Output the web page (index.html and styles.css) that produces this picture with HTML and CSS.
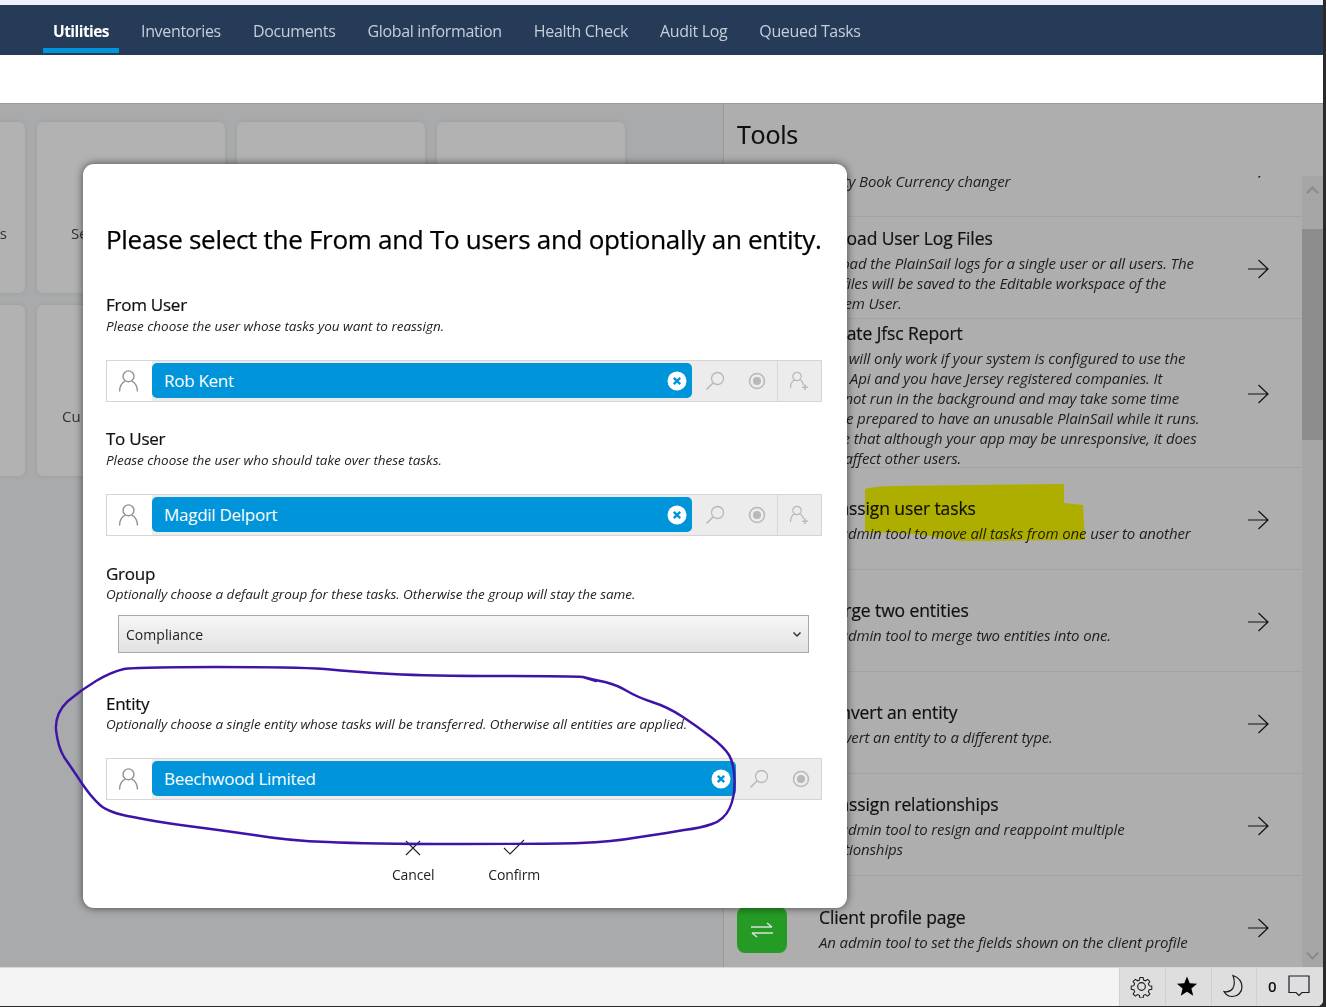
FILE: index.html
```html
<!DOCTYPE html>
<html lang="en">
<head>
<meta charset="utf-8">
<title>Utilities</title>
<link rel="stylesheet" href="styles.css">
</head>
<body>
<svg width="0" height="0" class="defs">
  <defs>
    <symbol id="i-user" viewBox="0 0 20 22"><circle cx="10" cy="6.5" r="5.200" fill="none" stroke="currentColor" stroke-width="1.300"/><path d="M1.500 21c0-5.500 2.500-8.500 5.500-10M18.500 21c0-5.500-2.500-8.500-5.500-10" fill="none" stroke="currentColor" stroke-width="1.300"/></symbol>
    <symbol id="i-search" viewBox="0 0 20 20"><circle cx="12.500" cy="7.500" r="6" fill="none" stroke="currentColor" stroke-width="1.300"/><path d="M8 12L1.500 18.500" fill="none" stroke="currentColor" stroke-width="1.600"/></symbol>
    <symbol id="i-target" viewBox="0 0 20 20"><circle cx="10" cy="10" r="7.500" fill="none" stroke="currentColor" stroke-width="1.500"/><circle cx="10" cy="10" r="4" fill="currentColor"/></symbol>
    <symbol id="i-adduser" viewBox="0 0 20 20"><circle cx="8" cy="5.500" r="4.200" fill="none" stroke="currentColor" stroke-width="1.200"/><path d="M1.500 17c0-4.500 2-7 4-8M14.500 14c-.5-2.500-2-4.300-3-5" fill="none" stroke="currentColor" stroke-width="1.200"/><path d="M16 13.500v5.500M13.300 16.300h5.500" fill="none" stroke="currentColor" stroke-width="1.500"/></symbol>
    <symbol id="i-clear" viewBox="0 0 20 20"><circle cx="10" cy="10" r="9.500" fill="#fff"/><path d="M6.800 6.800l6.400 6.400M13.200 6.800l-6.400 6.400" fill="none" stroke="#0095da" stroke-width="2.400"/></symbol>
    <symbol id="i-arrow" viewBox="0 0 22 20"><path d="M1 10h20M11.500 1l9.500 9-9.500 9" fill="none" stroke="currentColor" stroke-width="1.200"/></symbol>
  </defs>
</svg>

<div class="window">
  <div class="top-strip"></div>
  <nav class="nav">
    <a class="nav-item active">Utilities</a>
    <a class="nav-item">Inventories</a>
    <a class="nav-item">Documents</a>
    <a class="nav-item">Global information</a>
    <a class="nav-item">Health Check</a>
    <a class="nav-item">Audit Log</a>
    <a class="nav-item">Queued Tasks</a>
  </nav>
  <div class="subbar"></div>

  <main class="main">
    <section class="board">
      <div class="card-grid">
        <div class="card card-cut"><span class="card-label">s</span></div>
        <div class="card card-se"><span class="card-label">Se</span></div>
        <div class="card"></div>
        <div class="card"></div>
        <div class="card card-cut"></div>
        <div class="card"><span class="card-label">Cu</span></div>
      </div>
    </section>

    <aside class="tools">
      <h2 class="tools-title">Tools</h2>
      <div class="tools-body">
        <div class="tool-list">
          <div class="tool tool-first">
            <div class="tool-text"><p class="tool-desc">Entity Book Currency changer</p></div>
            <svg class="arrow-tip" viewBox="0 0 22 2"><path d="M11.500 1.500L13 0" fill="none" stroke="#111" stroke-width="1.200"/></svg>
          </div>
          <div class="tool tool-3">
            <div class="tool-text"><h3>Upload User Log Files</h3><p class="tool-desc">Upload the PlainSail logs for a single user or all users. The<br>log files will be saved to the Editable workspace of the<br>System User.</p></div>
            <svg class="arrow"><use href="#i-arrow"/></svg>
          </div>
          <div class="tool tool-6">
            <div class="tool-text"><h3>Create Jfsc Report</h3><p class="tool-desc">This will only work if your system is configured to use the<br>JFSC Api and you have Jersey registered companies. It<br>will not run in the background and may take some time<br>so be prepared to have an unusable PlainSail while it runs.<br>Note that although your app may be unresponsive, it does<br>not affect other users.</p></div>
            <svg class="arrow"><use href="#i-arrow"/></svg>
          </div>
          <div class="tool">
            <div class="tool-text"><h3>Reassign user tasks</h3><p class="tool-desc">An admin tool to move all tasks from one user to another</p></div>
            <svg class="arrow"><use href="#i-arrow"/></svg>
          </div>
          <div class="tool">
            <div class="tool-text"><h3>Merge two entities</h3><p class="tool-desc">An admin tool to merge two entities into one.</p></div>
            <svg class="arrow"><use href="#i-arrow"/></svg>
          </div>
          <div class="tool">
            <div class="tool-text"><h3>Convert an entity</h3><p class="tool-desc">Convert an entity to a different type.</p></div>
            <svg class="arrow"><use href="#i-arrow"/></svg>
          </div>
          <div class="tool">
            <div class="tool-text"><h3>Reassign relationships</h3><p class="tool-desc">An admin tool to resign and reappoint multiple<br>relationships</p></div>
            <svg class="arrow"><use href="#i-arrow"/></svg>
          </div>
          <div class="tool tool-last">
            <div class="tool-icon"><svg viewBox="0 0 24 16" width="24" height="16"><path d="M1 5h21M17 1l5 4M23 11H2M7 15l-5-4" fill="none" stroke="#d8e2d8" stroke-width="1.600"/></svg></div>
            <div class="tool-text"><h3>Client profile page</h3><p class="tool-desc">An admin tool to set the fields shown on the client profile</p></div>
            <svg class="arrow"><use href="#i-arrow"/></svg>
          </div>
        </div>
        <div class="scrollbar">
          <span class="chev chev-up"></span>
          <span class="thumb"></span>
          <span class="chev chev-down"></span>
        </div>
      </div>
    </aside>
  </main>

  <footer class="footer">
    <div class="footer-btns">
      <span class="f-btn"><svg viewBox="0 0 24 24" width="23" height="23"><path d="M10.200 1.500h3.600l.6 3 2.200.9 2.600-1.700 2.500 2.500-1.700 2.600.9 2.200 3 .6v3.600l-3 .6-.9 2.200 1.700 2.600-2.500 2.500-2.600-1.700-2.200.9-.6 3h-3.600l-.6-3-2.200-.9-2.600 1.700-2.500-2.500 1.700-2.600-.9-2.200-3-.6v-3.600l3-.6.9-2.200-1.700-2.600 2.500-2.500 2.600 1.700 2.200-.9z" transform="translate(1.200 1.200) scale(.9)" fill="none" stroke="#1a1a1a" stroke-width="1.200"/><circle cx="12" cy="12" r="4" fill="none" stroke="#1a1a1a" stroke-width="1.200"/></svg></span>
      <span class="f-btn f-star"><svg viewBox="0 0 24 24" width="22" height="22"><path d="M12 1.500l3 7.600 8 .5-6.200 5.100 2 7.800L12 18.200l-6.800 4.300 2-7.800L1 9.600l8-.5z" fill="#000"/></svg></span>
      <span class="f-btn f-moon"><svg viewBox="0 0 24 24" width="24" height="24"><path d="M12 1.500c5 1.800 9 6 9 11.500a9.500 9.500 0 0 1-9.500 9.500c-3.700 0-7-2-8.500-5 7 1.500 13-4 9-16z" fill="none" stroke="#1a1a1a" stroke-width="1.200"/></svg></span>
      <span class="f-btn f-msg"><span class="f-count">0</span><svg viewBox="0 0 22 22" width="22" height="22"><path d="M1 1h20v16.500h-7L11 20.500 8 17.500H1z" fill="none" stroke="#1a1a2a" stroke-width="1.200"/></svg></span>
    </div>
  </footer>

  <svg class="highlight" viewBox="0 0 1326 1007" width="1326" height="1007">
    <path d="M865 489Q870 487 890 486L1064 484 1064 503 1083 505 1085 540 960 541Q930 535 900 533L865 532Z" fill="#b3b300"/>
  </svg>

  <div class="modal">
    <h1 class="modal-title">Please select the From and To users and optionally an entity.</h1>

    <div class="field">
      <div class="field-label">From User</div>
      <div class="field-hint">Please choose the user whose tasks you want to reassign.</div>
      <div class="picker">
        <svg class="p-user"><use href="#i-user"/></svg>
        <div class="chip"><span>Rob Kent</span><svg class="chip-x"><use href="#i-clear"/></svg></div>
        <div class="p-tools"><svg class="p-ico"><use href="#i-search"/></svg><svg class="p-ico"><use href="#i-target"/></svg></div>
        <div class="p-add"><svg class="p-ico"><use href="#i-adduser"/></svg></div>
      </div>
    </div>

    <div class="field">
      <div class="field-label">To User</div>
      <div class="field-hint">Please choose the user who should take over these tasks.</div>
      <div class="picker">
        <svg class="p-user"><use href="#i-user"/></svg>
        <div class="chip"><span>Magdil Delport</span><svg class="chip-x"><use href="#i-clear"/></svg></div>
        <div class="p-tools"><svg class="p-ico"><use href="#i-search"/></svg><svg class="p-ico"><use href="#i-target"/></svg></div>
        <div class="p-add"><svg class="p-ico"><use href="#i-adduser"/></svg></div>
      </div>
    </div>

    <div class="field field-group">
      <div class="field-label">Group</div>
      <div class="field-hint">Optionally choose a default group for these tasks. Otherwise the group will stay the same.</div>
      <div class="select"><span>Compliance</span><svg width="10" height="7" viewBox="0 0 10 7"><path d="M1.500 1.500L5 5l3.500-3.500" fill="none" stroke="#333" stroke-width="1.500"/></svg></div>
    </div>

    <div class="field field-entity">
      <div class="field-label">Entity</div>
      <div class="field-hint">Optionally choose a single entity whose tasks will be transferred. Otherwise all entities are applied.</div>
      <div class="picker">
        <svg class="p-user"><use href="#i-user"/></svg>
        <div class="chip"><span>Beechwood Limited</span><svg class="chip-x"><use href="#i-clear"/></svg></div>
        <div class="p-tools"><svg class="p-ico"><use href="#i-search"/></svg><svg class="p-ico"><use href="#i-target"/></svg></div>
      </div>
    </div>

    <div class="actions">
      <button class="action"><svg width="18" height="18" viewBox="0 0 18 18"><path d="M2 2l14 14M16 2L2 16" fill="none" stroke="#222" stroke-width="1.100"/></svg><span>Cancel</span></button>
      <button class="action"><svg width="22" height="18" viewBox="0 0 22 18"><path d="M1 9l6 6L21 1" fill="none" stroke="#222" stroke-width="1.100"/></svg><span>Confirm</span></button>
    </div>
  </div>

  <svg class="scribble" viewBox="0 0 1326 1007" width="1326" height="1007">
    <path d="M583 677Q594 680 605 682Q617 685 627 691Q637 697 652 702Q668 707 683 717Q698 727 711 737Q724 747 729 755Q734 763 734.500 780Q735 797 729.500 808.500Q724 820 712 824Q701 828 684 830Q668 833 640 837Q611 842 580 843Q550 844 458 844Q366 844 328 842Q290 841 254 835Q219 830 188 826Q157 822 133 817Q109 813 100 805Q91 797 81 782Q71 767 64 757Q58 747 56 730Q55 713 68 701Q81 690 96 681Q111 672 124 669Q137 667 216 667Q295 667 325 669Q356 672 392 674Q428 676 500 676Q571 676 583 677L596 681" fill="none" stroke="#3f13a6" stroke-width="2.400" stroke-linejoin="round" stroke-linecap="round"/>
  </svg>
</div>
</body>
</html>
```

FILE: styles.css
```css
* { box-sizing: border-box; }
html, body { margin: 0; padding: 0; }
body {
  width: 1326px;
  height: 1007px;
  overflow: hidden;
  background: #2a2a2a;
  font-family: "Open Sans", "Noto Sans", sans-serif;
  color: #111;
}
.defs { position: absolute; }
.window {
  position: relative;
  width: 1323px;
  height: 1006px;
  background: #fff;
  display: flex;
  flex-direction: column;
  overflow: hidden;
  border-bottom-right-radius: 6px;
}
.top-strip { height: 5px; background: #eff2fb; flex: none; }
.nav {
  height: 50px;
  flex: none;
  background: #253b57;
  display: flex;
  padding: 0 0 0 43px;
}
.nav-item {
  height: 48px;
  padding: 4px 10px 0;
  margin-right: 12px;
  display: flex;
  align-items: center;
  font-size: 16px;
  letter-spacing: -.34px;
  color: #c5ced9;
  white-space: nowrap;
}
.nav-item.active {
  color: #fff;
  font-weight: 700;
  font-size: 15.500px;
  letter-spacing: -.55px;
  border-bottom: 5px solid #0095da;
  padding-top: 9px;
}
.subbar { height: 48px; flex: none; background: #fff; }
.main {
  flex: 1;
  display: flex;
  min-height: 0;
  background: #a9aaab;
  border-top: 1px solid #9a9a9a;
}
.board {
  width: 723px;
  flex: none;
  overflow: hidden;
  padding-top: 18px;
}
.card-grid {
  display: grid;
  grid-template-columns: repeat(4, 188px);
  grid-auto-rows: 171px;
  gap: 12px;
  margin-left: -163px;
}
.card {
  background: #b2b2b2;
  border-radius: 6px;
  box-shadow: 0 0 5px rgba(0,0,0,.08);
  display: flex;
  align-items: center;
  padding: 50px 0 0 25px;
  font-size: 15px;
  color: #333;
}
.card-se { padding-left: 34px; }
.card-cut { justify-content: flex-end; padding: 50px 18px 0 0; }
.card-cut:nth-child(5) { grid-column: 1; }
.tools {
  flex: 1;
  display: flex;
  flex-direction: column;
  background: #aeaeae;
  border-left: 1px solid #9a9a9a;
  min-width: 0;
}
.tools-title {
  margin: 0;
  height: 72px;
  padding: 12px 0 0 13px;
  font-size: 25px;
  line-height: 36px;
  font-weight: 400;
  letter-spacing: -.2px;
  color: #0e0e0e;
  -webkit-text-stroke: .2px #0e0e0e;
}
.tools-body { flex: 1; display: flex; min-height: 0; }
.tool-list { flex: 1; min-width: 0; }
.tool {
  height: 102px;
  display: flex;
  align-items: center;
  padding: 0 33px 0 95px;
  border-bottom: 1px solid #a3a3a3;
  position: relative;
}
.tool-first { height: 41px; align-items: flex-start; }
.tool-first .tool-text { padding-top: 0; }
.tool-first .tool-desc { line-height: 10px; }
.arrow-tip { width: 22px; height: 2px; flex: none; }
.tool-3 .tool-text { align-self: flex-start; padding-top: 10px; }
.tool-6 { height: 149px; }
.tool-6 .tool-text { align-self: flex-start; padding-top: 3px; }
.tool-text { flex: 1; min-width: 0; padding-top: 2px; }
.tool h3 {
  margin: 0 0 3px;
  font-size: 17.500px;
  line-height: 23px;
  font-weight: 400;
  letter-spacing: -.1px;
  color: #111;
  -webkit-text-stroke: .2px #111;
}
.tool-desc {
  margin: 0;
  font-size: 15px;
  line-height: 20px;
  font-style: italic;
  letter-spacing: -.12px;
  color: #1e1e1e;
  white-space: nowrap;
}
.tool-last { height: 91px; align-items: flex-start; border-bottom: 0; }
.tool-last .tool-text { padding-top: 30px; }
.tool-last .arrow { margin-top: 42px; }
.arrow { width: 22px; height: 20px; flex: none; color: #111; margin-top: 2px; }
.tool-icon {
  position: absolute;
  left: 13px;
  top: 31px;
  width: 50px;
  height: 46px;
  border-radius: 8px;
  background: #259b25;
  display: flex;
  align-items: center;
  justify-content: center;
}
.scrollbar {
  width: 21px;
  flex: none;
  background: #a6a6a6;
  display: flex;
  flex-direction: column;
  align-items: center;
  position: relative;
}
.thumb { position: absolute; left: 0; right: 0; top: 53px; height: 211px; background: #8c8c8c; }
.chev {
  position: absolute;
  left: 6px;
  width: 9px;
  height: 9px;
  border-left: 2px solid #8a8a8a;
  border-top: 2px solid #8a8a8a;
}
.chev-up { top: 12px; transform: rotate(45deg); }
.chev-down { bottom: 9px; transform: rotate(225deg); }
.footer {
  height: 39px;
  flex: none;
  background: #f4f4f4;
  display: flex;
  justify-content: flex-end;
  border-top: 1px solid #d8d8d8;
}
.footer-btns { display: flex; background: #dedede; width: 204px; }
.f-btn {
  width: 46px;
  display: flex;
  align-items: center;
  justify-content: center;
  border-left: 1px solid #cfcfcf;
  padding: 0 2px 2px 0;
}
.f-star { padding-right: 4px; }
.f-moon { width: 45px; }
.f-msg { width: 67px; gap: 11px; justify-content: flex-start; padding: 0 0 2px 11px; }
.f-count { font-size: 15px; font-weight: 600; }
.highlight { position: absolute; left: 0; top: 0; pointer-events: none; mix-blend-mode: darken; }
.modal {
  position: absolute;
  left: 83px;
  top: 164px;
  width: 764px;
  height: 744px;
  background: #fff;
  border-radius: 11px;
  box-shadow: 0 0 9px rgba(0,0,0,.6);
  padding: 58px 25px 0 23px;
}
.modal-title {
  margin: 0;
  font-size: 26px;
  line-height: 34px;
  font-weight: 400;
  letter-spacing: -.29px;
  white-space: nowrap;
  color: #000;
  -webkit-text-stroke: .25px #000;
}
.field { margin-top: 25px; }
.modal-title + .field { margin-top: 37px; }
.field-label {
  font-size: 17px;
  line-height: 23px;
  letter-spacing: -.25px;
  color: #111;
  -webkit-text-stroke: .2px #111;
}
.field-hint {
  margin-top: 1px;
  font-size: 13.500px;
  line-height: 18px;
  font-style: italic;
  letter-spacing: -.03px;
  white-space: nowrap;
  color: #222;
}
.picker {
  height: 42px;
  margin-top: 25px;
  border: 1px solid #d5d5d5;
  display: flex;
  align-items: stretch;
  background: #ececec;
}
.p-user {
  width: 45px;
  flex: none;
  padding: 0 13px 0 11px;
  background: #fff;
  color: #8f8f8f;
}
.chip {
  flex: 1;
  min-width: 0;
  margin: 2px 0 3px;
  background: #0095da;
  border-radius: 5px;
  display: flex;
  align-items: center;
  justify-content: space-between;
  padding: 0 5px 0 12px;
  font-size: 17px;
  letter-spacing: -.27px;
  color: #fff;
}
.chip-x { width: 20px; height: 20px; }
.p-tools { display: flex; width: 85px; flex: none; align-items: center; padding-left: 2px; }
.p-ico { width: 20px; height: 20px; margin: 0 11px; color: #b8b8b8; flex: none; }
.p-add {
  width: 44px;
  flex: none;
  border-left: 1px solid #d8d8d8;
  display: flex;
  align-items: center;
}
.field-group { margin-top: 26px; }
.field-group .field-hint, .field-entity .field-hint { margin-top: 0; }
.select {
  width: 691px;
  height: 38px;
  margin: 12px 0 0 12px;
  border: 1px solid #a9a9a9;
  background: linear-gradient(#f6f6f6, #e2e2e2);
  display: flex;
  align-items: center;
  justify-content: space-between;
  padding: 0 6px 0 7px;
  font-size: 14px;
  letter-spacing: .05px;
  color: #222;
}
.field-entity { margin-top: 39px; }
.actions {
  display: flex;
  justify-content: center;
  gap: 54px;
  margin: 39px 0 0 4px;
}
.action {
  background: none;
  border: 0;
  padding: 0;
  font: inherit;
  font-size: 14px;
  letter-spacing: -.15px;
  color: #222;
  display: flex;
  flex-direction: column;
  align-items: center;
  gap: 8px;
}
.scribble { position: absolute; left: 0; top: 0; pointer-events: none; }
```
